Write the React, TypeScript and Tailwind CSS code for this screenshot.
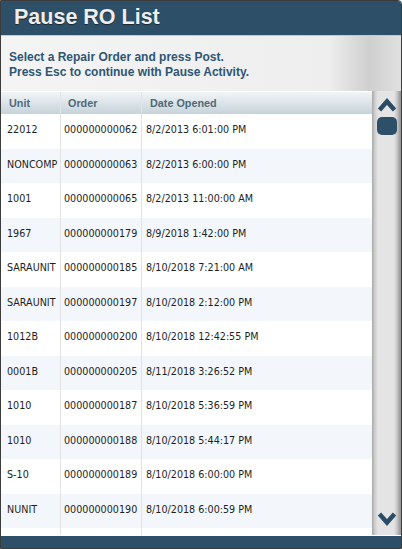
import React from "react";

const rows: [string, string, string][] = [
  ["22012", "000000000062", "8/2/2013 6:01:00 PM"],
  ["NONCOMP", "000000000063", "8/2/2013 6:00:00 PM"],
  ["1001", "000000000065", "8/2/2013 11:00:00 AM"],
  ["1967", "000000000179", "8/9/2018 1:42:00 PM"],
  ["SARAUNIT", "000000000185", "8/10/2018 7:21:00 AM"],
  ["SARAUNIT", "000000000197", "8/10/2018 2:12:00 PM"],
  ["1012B", "000000000200", "8/10/2018 12:42:55 PM"],
  ["0001B", "000000000205", "8/11/2018 3:26:52 PM"],
  ["1010", "000000000187", "8/10/2018 5:36:59 PM"],
  ["1010", "000000000188", "8/10/2018 5:44:17 PM"],
  ["S-10", "000000000189", "8/10/2018 6:00:00 PM"],
  ["NUNIT", "000000000190", "8/10/2018 6:00:59 PM"],
];

export default function App() {
  return (
    <div className="w-[402px] h-[549px] border border-[#3c3c3c] rounded-tr-[4px] overflow-hidden flex flex-col bg-white" style={{ fontFamily: '"Liberation Sans", Arial, sans-serif' }}>
      <div className="h-[34px] shrink-0 bg-[#2e4f68] flex items-center pl-[13px]">
        <span className="text-[21.5px] font-bold text-[#eeeeee] leading-none [text-shadow:0_1px_1px_rgba(0,0,0,0.5)]">Pause RO List</span>
      </div>
      <div className="h-[56px] shrink-0 border-t border-[#c8c8c8] bg-[linear-gradient(to_right,#f4f4f4_0%,#eeeeee_82%,#cfcfcf_92%,#e0e0e0_100%)] flex flex-col justify-center pl-[8px] pt-[2px]">
        <div className="text-[12px] font-bold text-[#2d5673] leading-[15px]">Select a Repair Order and press Post.</div>
        <div className="text-[12px] font-bold text-[#2d5673] leading-[15px]">Press Esc to continue with Pause Activity.</div>
      </div>
      <div className="flex-1 flex min-h-0">
        <div className="w-[371px] flex flex-col border-t border-white">
          <div className="h-[22px] shrink-0 flex bg-[linear-gradient(to_bottom,#f1f5f7,#c6d3da)] text-[10.8px] font-bold text-[#4f6878] items-center">
            <div className="w-[60px] pl-[8px] h-full flex items-center border-r border-[#dfe6ea]">Unit</div>
            <div className="w-[81px] pl-[7px] h-full flex items-center border-r border-[#dfe6ea]">Order</div>
            <div className="flex-1 pl-[8px] h-full flex items-center">Date Opened</div>
          </div>
          <div className="flex-1 flex flex-col text-[9.6px] text-[#1e1e1e]" style={{ fontFamily: '"DejaVu Sans", Verdana, sans-serif' }}>
            {rows.map((r, i) => (
              <div key={i} className={`h-[34.5px] shrink-0 flex ${i % 2 === 1 ? "bg-[#f3f7fb]" : "bg-white"}`}>
                <div className="w-[60px] pl-[6px] flex items-center pb-[2px] border-r border-[#e2e2e2]">{r[0]}</div>
                <div className="w-[81px] pl-[3px] flex items-center pb-[2px] border-r border-[#e2e2e2]">{r[1]}</div>
                <div className="flex-1 pl-[4px] flex items-center pb-[2px]">{r[2]}</div>
              </div>
            ))}
            <div className="flex-1 flex">
              <div className="w-[60px] border-r border-[#e2e2e2]" />
              <div className="w-[81px] border-r border-[#e2e2e2]" />
            </div>
          </div>
        </div>
        <div className="w-[29px] flex flex-col items-center bg-[linear-gradient(to_right,#a8a8a8_0px,#cfcfcf_3px,#e4e4e4_6px,#e4e4e4_22px,#c8c8c8_25px,#9a9a9a_28px)]">
          <svg width="20" height="15" viewBox="0 0 20 15" className="mt-[6px]">
            <path d="M2.5 13 L10 4.5 L17.5 13" stroke="#2c4c66" strokeWidth="4.5" fill="none" strokeLinejoin="miter" />
          </svg>
          <div className="w-[20px] h-[18px] rounded-[5px] bg-[#2e4f68] mt-[5px]" />
          <div className="flex-1" />
          <svg width="20" height="15" viewBox="0 0 20 15" className="mb-[8px]">
            <path d="M2.5 2 L10 10.5 L17.5 2" stroke="#2c4c66" strokeWidth="4.5" fill="none" strokeLinejoin="miter" />
          </svg>
        </div>
      </div>
      <div className="h-[13px] shrink-0 bg-[#2e4f68] border-t border-white" />
    </div>
  );
}
